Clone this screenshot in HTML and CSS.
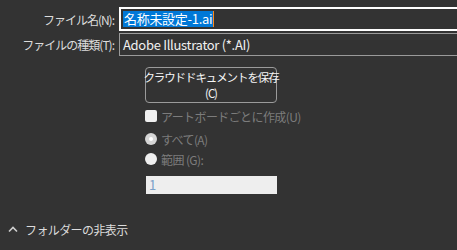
FILE: index.html
```html
<!DOCTYPE html>
<html lang="ja">
<head>
  <meta charset="UTF-8" />
  <title>保存</title>
  <link rel="stylesheet" href="styles.css">
</head>
<body>
  <div class="dialog">
    <div class="fields">
      <label class="label" for="fname">ファイル名(N):</label>
      <div class="field active"><span class="sel">名称未設定-1.ai</span><span class="caret"></span></div>

      <label class="label">ファイルの種類(T):</label>
      <div class="field">Adobe Illustrator (*.AI)</div>
    </div>

    <div class="options">
      <div class="button">
        <span class="line">クラウドドキュメントを保存</span>
        <span class="line">(C)</span>
      </div>

      <div class="opt disabled first">
        <span class="check"></span>
        <span>アートボードごとに作成(U)</span>
      </div>
      <div class="opt disabled second">
        <span class="radio on"></span>
        <span>すべて(A)</span>
      </div>
      <div class="opt disabled">
        <span class="radio"></span>
        <span>範囲 (G):</span>
      </div>
      <div class="range">1</div>
    </div>

    <div class="footer">
      <svg class="chev" width="10" height="7" viewBox="0 0 10 7">
        <path d="M1 5.5 L5 1.5 L9 5.5" fill="none" stroke="#cfcfcf" stroke-width="1.6"/>
      </svg>
      <span>フォルダーの非表示</span>
    </div>
  </div>
</body>
</html>
```

FILE: styles.css
```css
body {
  margin: 0;
  background: #333333;
  font-family: "Noto Sans CJK JP", "Noto Sans", sans-serif;
  font-size: 12px;
  color: #dcdcdc;
  width: 457px;
  height: 250px;
  overflow: hidden;
}

.dialog {
  height: 250px;
  display: flex;
  flex-direction: column;
}

.fields {
  display: grid;
  grid-template-columns: 119px 1fr;
  row-gap: 2px;
  padding-top: 7px;
  margin-right: -4px;
}

.label {
  text-align: right;
  padding-right: 5px;
  align-self: center;
  letter-spacing: -1px;
}

.field {
  height: 21px;
  border: 1px solid #9a9a9a;
  border-right: none;
  display: flex;
  align-items: center;
  padding-left: 3px;
  font-size: 13px;
  color: #f0f0f0;
  letter-spacing: -0.3px;
}

.field.active {
  height: 20px;
  border: 2px solid #ffffff;
  border-right: none;
  padding-left: 2px;
}

.sel {
  background: #0078d7;
  color: #ffffff;
  line-height: 16px;
  padding: 0 1px;
}

.caret {
  width: 1px;
  height: 16px;
  background: #ff8a1a;
}

.options {
  padding-left: 145px;
  padding-top: 11px;
  display: flex;
  flex-direction: column;
  align-items: flex-start;
}

.button {
  width: 132px;
  height: 36px;
  border: 1px solid #9b9b9b;
  border-radius: 4px;
  color: #f4f4f4;
  font-size: 11.5px;
  box-sizing: border-box;
  letter-spacing: -1.1px;
  white-space: nowrap;
  display: flex;
  flex-direction: column;
  align-items: center;
  justify-content: center;
  gap: 1px;
}

.line {
  line-height: 15px;
}

.opt {
  display: flex;
  align-items: center;
  gap: 4px;
  height: 20px;
  letter-spacing: -0.6px;
}

.opt.first {
  margin-top: 3px;
}

.opt.second {
  margin-top: 3px;
}

.disabled {
  color: #7c7c7c;
}

.check {
  width: 12px;
  height: 12px;
  background: #f0f0f0;
  border-radius: 2px;
}

.radio {
  width: 12px;
  height: 12px;
  border-radius: 50%;
  background: #f0f0f0;
  position: relative;
}

.radio.on {
  background: #d6d6d6;
}

.radio.on::after {
  content: "";
  position: absolute;
  left: 4px;
  top: 4px;
  width: 4px;
  height: 4px;
  border-radius: 50%;
  background: #ffffff;
}

.range {
  margin-top: 7px;
  margin-left: 1px;
  width: 128px;
  height: 18px;
  background: #eeeeee;
  color: #7aa0c8;
  font-size: 13px;
  line-height: 18px;
  padding-left: 3px;
  box-sizing: content-box;
}

.footer {
  margin-top: auto;
  margin-bottom: 12px;
  padding-left: 8px;
  display: flex;
  align-items: center;
  gap: 7px;
  letter-spacing: -0.6px;
}
```
